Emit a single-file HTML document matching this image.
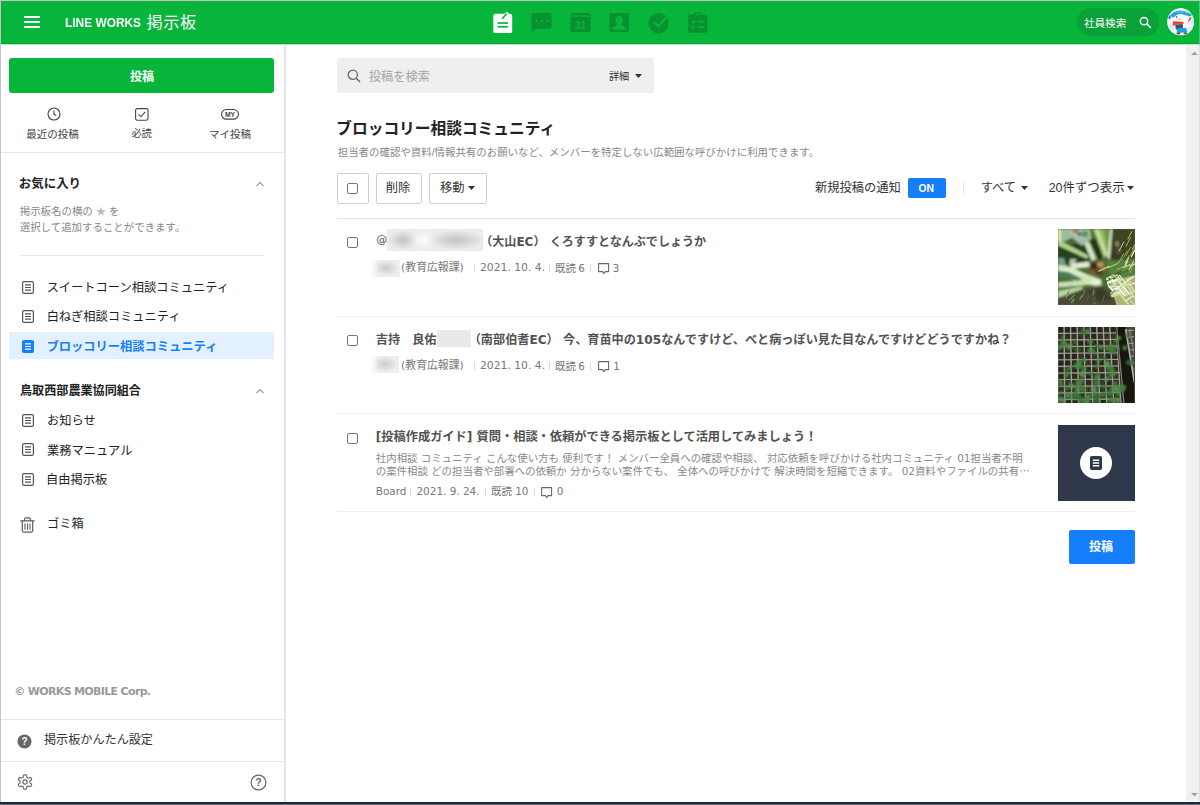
<!DOCTYPE html>
<html lang="ja">
<head>
<meta charset="utf-8">
<title>LINE WORKS 掲示板</title>
<style>
*{box-sizing:border-box;margin:0;padding:0}
html,body{width:1200px;height:805px;overflow:hidden;background:#fff}
body{font-family:"Liberation Sans","Noto Sans CJK JP",sans-serif;color:#222;position:relative;font-size:12px}
.abs{position:absolute}
.t{position:absolute;white-space:nowrap;line-height:1}
#frame-top{left:0;top:0;width:1200px;height:1px;background:#c4c4c4}
#frame-left{left:0;top:0;width:1px;height:805px;background:#c4c4c4}
#frame-bottom{left:0;top:802px;width:1200px;height:2px;background:#10284a}
#frame-bottom2{left:0;top:804px;width:1200px;height:1px;background:#6c6e78}
#frame-right{left:1199px;top:0;width:1px;height:802px;background:rgba(200,200,200,0.45)}
#header{left:1px;top:1px;width:1199px;height:43px;background:#07b53b}
.hb{position:absolute;left:24px;width:16px;height:2px;background:#fff}
#sidebar-border{left:284px;top:45px;width:2px;height:757px;background:#e3e3e3}
.hr{position:absolute;height:1px;background:#e6e6e6}
#scroll{left:1186px;top:45px;width:14px;height:756px;background:#f1f1f1}
.btn{position:absolute;border:1px solid #d0d0d0;border-radius:2px;background:#fff}
.cb{position:absolute;width:11px;height:11px;border:1px solid #767676;border-radius:2px;background:#fff}
.side-item{position:absolute;left:47px;font-size:12.5px;color:#222;white-space:nowrap;line-height:1}
.ptitle{font-size:12.5px;font-weight:bold;color:#525252;font-family:"DejaVu Sans","Noto Sans CJK JP",sans-serif}
.pbody{font-size:11px;color:#888;font-family:"DejaVu Sans","Noto Sans CJK JP",sans-serif}
.cjk{font-family:"Noto Sans CJK JP",sans-serif}
.meta{position:absolute;font-size:11px;color:#777;white-space:nowrap;line-height:1;font-family:"DejaVu Sans","Noto Sans CJK JP",sans-serif}
</style>
</head>
<body>
<!-- header -->
<div id="header" class="abs"></div>
<div class="abs" style="left:1px;top:43px;width:1199px;height:1px;background:#06a737"></div>
<div class="abs" style="left:1px;top:44px;width:1199px;height:1px;background:#b4e8c2"></div>
<div class="hb" style="top:16px"></div>
<div class="hb" style="top:21px"></div>
<div class="hb" style="top:26px"></div>
<div id="logo" class="t" style="left:65.2px;top:17px;font-size:12.6px;font-weight:bold;color:#fff;transform:scaleX(0.945);transform-origin:0 0">LINE WORKS</div>
<div id="logo2" class="t" style="left:146.4px;top:14.4px;font-size:16.2px;color:#fff;letter-spacing:0.6px">掲示板</div>


<!-- header app icons -->
<svg class="abs" style="left:493px;top:12px" width="20" height="21" viewBox="0 0 20 21">
  <path d="M2.5 1.8 H11.2 L13.2 0.2 Q14.2 -0.3 15 0.5 L15.6 1.8 H17 Q19.2 1.8 19.2 4 V19 Q19.2 21.2 17 21.2 H2.5 Q0.3 21.2 0.3 19 V4 Q0.3 1.8 2.5 1.8Z" fill="#fff"/>
  <path d="M9.6 6.2 L13.2 2.2" fill="none" stroke="#07b53b" stroke-width="1.7" stroke-linecap="round"/>
  <rect x="4.6" y="10.2" width="10.4" height="1.7" fill="#07b53b"/>
  <rect x="4.6" y="13.9" width="10.4" height="1.7" fill="#07b53b"/>
</svg>
<svg class="abs" style="left:531px;top:13px" width="21" height="20" viewBox="0 0 21 20">
  <path d="M2.3 0 H18.7 Q20.5 0 20.5 1.8 V14 Q20.5 15.8 18.7 15.8 H5.2 L0.5 19.6 V1.8 Q0.5 0 2.3 0Z" fill="#09902f"/>
  <circle cx="5.7" cy="8" r="1.2" fill="#07b53b"/><circle cx="10.9" cy="8" r="1.2" fill="#07b53b"/><circle cx="16.1" cy="8" r="1.2" fill="#07b53b"/>
</svg>
<svg class="abs" style="left:570px;top:13px" width="21" height="20" viewBox="0 0 21 20">
  <rect x="0.5" y="0" width="20" height="19" rx="1.8" fill="#09902f"/>
  <rect x="0.5" y="2.5" width="20" height="1.1" fill="#07b53b"/>
  <text x="10.5" y="15.6" font-family="Liberation Sans, sans-serif" font-weight="bold" font-size="10.5" text-anchor="middle" fill="#07b53b">31</text>
</svg>
<svg class="abs" style="left:609px;top:13px" width="21" height="20" viewBox="0 0 21 20">
  <rect x="0.5" y="0" width="19.5" height="19" rx="1.8" fill="#09902f"/>
  <path d="M10.2 3 C13.2 3 14 5.4 13.8 7.6 C13.6 9.6 12.8 10.6 12.4 11.2 C12.4 12.6 13.4 13 15.4 13.8 C16.8 14.4 17.4 15.2 17.4 16.8 H3 C3 15.2 3.6 14.4 5 13.8 C7 13 8 12.6 8 11.2 C7.6 10.6 6.8 9.6 6.6 7.6 C6.4 5.4 7.2 3 10.2 3Z" fill="#07b53b"/>
</svg>
<svg class="abs" style="left:648px;top:13px" width="21" height="21" viewBox="0 0 21 21">
  <circle cx="10.7" cy="10.2" r="10.2" fill="#09902f"/>
  <path d="M5.5 8.7 L10 13.3 L20.5 2.3" fill="none" stroke="#07b53b" stroke-width="2.3"/>
</svg>
<svg class="abs" style="left:688px;top:12px" width="20" height="21" viewBox="0 0 20 21">
  <path d="M2 2.6 H6 V1.4 Q6 0.2 7.2 0.2 H12.4 Q13.6 0.2 13.6 1.4 V2.6 H17.6 Q19.4 2.6 19.4 4.4 V19 Q19.4 20.8 17.6 20.8 H2 Q0.2 20.8 0.2 19 V4.4 Q0.2 2.6 2 2.6Z" fill="#09902f"/>
  <rect x="7.4" y="1.6" width="4.8" height="1.6" fill="#07b53b"/>
  <path d="M3.6 9.4 L5 10.8 L7.4 8.2" fill="none" stroke="#07b53b" stroke-width="1.3"/>
  <rect x="9.4" y="8.8" width="7" height="1.7" fill="#07b53b"/>
  <rect x="3.8" y="13.8" width="2.6" height="2.4" fill="#07b53b"/>
  <rect x="9.4" y="14.2" width="7" height="1.7" fill="#07b53b"/>
</svg>

<!-- header right -->
<div class="abs" style="left:1077px;top:8.3px;width:82px;height:27.4px;border-radius:14px;background:#0aa238"></div>
<div id="x1" class="t" style="left:1083.91px;top:17.7px;font-size:10.6px;color:#fff">社員検索</div>
<svg class="abs" style="left:1139px;top:16.2px" width="13" height="13" viewBox="0 0 13 13"><circle cx="5" cy="5.2" r="3.7" fill="none" stroke="#fff" stroke-width="1.4"/><path d="M7.8 8L11.4 11.4" stroke="#fff" stroke-width="1.5" stroke-linecap="round"/></svg>
<div class="abs" style="left:1166.6px;top:8.2px;width:27.6px;height:27.6px;border-radius:50%;overflow:hidden"><svg width="27.6" height="27.6" viewBox="0 0 27.6 27.6"><defs><filter id="ba" x="-10%" y="-10%" width="120%" height="120%"><feGaussianBlur stdDeviation="0.45"/></filter><clipPath id="ca"><circle cx="13.8" cy="13.8" r="13.8"/></clipPath></defs><g clip-path="url(#ca)"><rect width="27.6" height="27.6" fill="#f3f6fb"/><g filter="url(#ba)"><path d="M0 8 L4 5 L6 9 L2 13Z" fill="#cfe2f4"/><path d="M22 9 L27.6 8 L27.6 18 L23 16Z" fill="#dbe8f6"/><path d="M1 16 L6 15 L7 23 L3 22Z" fill="#dfeaf6"/><path d="M19 20 L25 18 L24 24 L20 25Z" fill="#e3ecf7"/><ellipse cx="2.6" cy="9.2" rx="1" ry="1.6" fill="#4c5c9c"/><path d="M3 7.4 Q7 2.6 13.5 3 Q20 2.8 25.4 7 L22.5 8.4 Q14 4.8 6 9.4Z" fill="#2aa0e4"/><path d="M9 3.6 Q13 1.6 18 3.2 L17 5 L10 5Z" fill="#43b0ea"/><circle cx="19.9" cy="4" r="1.2" fill="#e8c840"/><ellipse cx="13.4" cy="10" rx="5.6" ry="4" fill="#ffffff"/><ellipse cx="12.4" cy="11" rx="1.5" ry="0.9" fill="#e6d050"/><path d="M9 8 L10.2 8 L10.2 10 L9 10Z" fill="#3a78c8"/><path d="M6 13.2 L16.2 13.7 L16.9 15.7 L9.7 16.3 L5.7 17.9Z" fill="#e8442c"/><path d="M19.5 13.5 L23.5 9.2 L24.4 10 L21 14.4Z" fill="#b03a3a"/><path d="M17 11 L22 10 L21 14 L17 14Z" fill="#ffffff"/><path d="M8.2 16.4 L15.7 16 L16.2 21.6 L8.8 21.6Z" fill="#4a4e68"/><path d="M9.7 20.6 L19 19.6 L20.4 24.4 L10 24.8Z" fill="#2a9fe0"/><path d="M16 17 L19.5 17.5 L19 20 L16 20Z" fill="#ffffff"/><path d="M9.7 24.6 L13.2 24.6 L13.2 26.2 L9.7 26.2Z M16.7 24.6 L19.7 24.6 L19.7 26.2 L16.7 26.2Z" fill="#7a3a30"/></g></g></svg></div>

<!-- sidebar -->
<div id="sidebar-border" class="abs"></div>
<div class="abs" style="left:9px;top:58px;width:265px;height:35px;border-radius:3px;background:#07b53b"></div>
<div id="x2" class="t" style="left:130.08px;top:70.85px;font-size:12.05px;font-weight:bold;color:#fff">投稿</div>

<div id="x3" class="t" style="left:26.37px;top:128.5px;font-size:10.5px;color:#444">最近の投稿</div>
<div id="x4" class="t" style="left:131.45px;top:128.5px;font-size:10.2px;color:#444">必読</div>
<div id="x5" class="t" style="left:209px;top:128.5px;font-size:10.5px;color:#444">マイ投稿</div>

<div class="hr" style="left:1px;top:152px;width:284px"></div>
<div id="x6" class="t" style="left:18.83px;top:177.9px;font-size:12.45px;font-weight:bold;color:#222">お気に入り</div>
<div id="x7" class="t" style="left:19.73px;top:206.8px;font-size:10.45px;color:#888">掲示板名の横の <span style="color:#bbb">★</span> を</div>
<div id="x8" class="t" style="left:19.73px;top:222.7px;font-size:10.45px;color:#888">選択して追加することができます。</div>
<div class="hr" style="left:20px;top:255px;width:244px"></div>

<div id="x9" class="side-item" style="top:281.5px;font-size:12.25px;left:46.64px">スイートコーン相談コミュニティ</div>
<div id="x10" class="side-item" style="top:310.8px;font-size:12.25px;left:46.64px">白ねぎ相談コミュニティ</div>
<div class="abs" style="left:9px;top:332px;width:265px;height:27px;background:#e3f0ff"></div>
<div id="x11" class="side-item" style="top:340.5px;color:#157efb;font-weight:bold;font-size:12.25px;left:46.64px">ブロッコリー相談コミュニティ</div>

<div id="x12" class="t" style="left:20px;top:385.3px;font-size:12.1px;font-weight:bold;color:#222">鳥取西部農業協同組合</div>
<div id="x13" class="side-item" style="top:414.5px;font-size:12.25px;left:47px">お知らせ</div>
<div id="x14" class="side-item" style="top:444.5px;font-size:12.25px;left:47px">業務マニュアル</div>
<div id="x15" class="side-item" style="top:473.5px;font-size:12.25px;left:46.1px">自由掲示板</div>
<div id="x16" class="side-item" style="top:518.3px;font-size:12.25px;left:47px">ゴミ箱</div>

<div id="x17" class="t" style="left:14.3px;top:686px;font-size:11px;font-weight:bold;color:#999;font-family:'DejaVu Sans',sans-serif;letter-spacing:-0.66px">© WORKS MOBILE Corp.</div>
<div class="hr" style="left:1px;top:719px;width:284px"></div>
<div id="x18" class="t" style="left:44px;top:734.2px;font-size:12.12px;color:#333">掲示板かんたん設定</div>
<div class="hr" style="left:1px;top:761px;width:284px"></div>


<!-- sidebar icons -->
<svg class="abs" style="left:47px;top:107px" width="14" height="14" viewBox="0 0 14 14"><circle cx="7" cy="7" r="6" fill="none" stroke="#444" stroke-width="1.1"/><path d="M7 3.6V7.2L9.2 8.4" fill="none" stroke="#444" stroke-width="1.1"/></svg>
<svg class="abs" style="left:135px;top:108px" width="14" height="13" viewBox="0 0 14 13"><rect x="0.6" y="0.6" width="12.4" height="11.6" rx="1.6" fill="none" stroke="#444" stroke-width="1.1"/><path d="M3.6 6.4L6 8.8L10.2 3.8" fill="none" stroke="#444" stroke-width="1.1"/></svg>
<svg class="abs" style="left:221px;top:109px" width="18" height="11" viewBox="0 0 18 11"><rect x="0.55" y="0.55" width="16.9" height="9.6" rx="4.8" fill="none" stroke="#444" stroke-width="1.1"/><text x="9" y="7.8" font-family="Liberation Sans, sans-serif" font-weight="bold" font-size="6.8" text-anchor="middle" fill="#444">MY</text></svg>
<svg class="abs" style="left:255.2px;top:181px" width="10" height="6" viewBox="0 0 10 6"><path d="M1.5 5L5 1.5L8.5 5" fill="none" stroke="#999" stroke-width="1.1"/></svg>
<svg class="abs" style="left:255.2px;top:388px" width="10" height="6" viewBox="0 0 10 6"><path d="M1.5 5L5 1.5L8.5 5" fill="none" stroke="#999" stroke-width="1.1"/></svg>
<svg class="abs" style="left:22px;top:281px" width="12" height="13" viewBox="0 0 12 13"><rect x="0.6" y="0.6" width="10.8" height="11.8" rx="1.6" fill="#fff" stroke="#555" stroke-width="1.2"/><path d="M3 3.9H9M3 6.5H9M3 9.1H9" stroke="#555" stroke-width="1.1"/></svg><svg class="abs" style="left:22px;top:310px" width="12" height="13" viewBox="0 0 12 13"><rect x="0.6" y="0.6" width="10.8" height="11.8" rx="1.6" fill="#fff" stroke="#555" stroke-width="1.2"/><path d="M3 3.9H9M3 6.5H9M3 9.1H9" stroke="#555" stroke-width="1.1"/></svg><svg class="abs" style="left:22px;top:340px" width="12" height="13" viewBox="0 0 12 13"><rect x="0" y="0" width="12" height="13" rx="2" fill="#157efb"/><path d="M3 3.9H9M3 6.5H9M3 9.1H9" stroke="#fff" stroke-width="1.2"/></svg><svg class="abs" style="left:22px;top:414px" width="12" height="13" viewBox="0 0 12 13"><rect x="0.6" y="0.6" width="10.8" height="11.8" rx="1.6" fill="#fff" stroke="#555" stroke-width="1.2"/><path d="M3 3.9H9M3 6.5H9M3 9.1H9" stroke="#555" stroke-width="1.1"/></svg><svg class="abs" style="left:22px;top:443px" width="12" height="13" viewBox="0 0 12 13"><rect x="0.6" y="0.6" width="10.8" height="11.8" rx="1.6" fill="#fff" stroke="#555" stroke-width="1.2"/><path d="M3 3.9H9M3 6.5H9M3 9.1H9" stroke="#555" stroke-width="1.1"/></svg><svg class="abs" style="left:22px;top:473px" width="12" height="13" viewBox="0 0 12 13"><rect x="0.6" y="0.6" width="10.8" height="11.8" rx="1.6" fill="#fff" stroke="#555" stroke-width="1.2"/><path d="M3 3.9H9M3 6.5H9M3 9.1H9" stroke="#555" stroke-width="1.1"/></svg>
<svg class="abs" style="left:20.2px;top:516.6px" width="15" height="16" viewBox="0 0 15 16"><path d="M0.3 3.9H14.7M4.5 3.7V2.6Q4.5 0.9 6.2 0.9H8.8Q10.5 0.9 10.5 2.6V3.7M2.3 4.2V13.4Q2.3 15.2 4.1 15.2H10.9Q12.7 15.2 12.7 13.4V4.2" fill="none" stroke="#5a5a5a" stroke-width="1.2"/><path d="M5 6.6V12.8M7.5 6.6V12.8M10 6.6V12.8" stroke="#5a5a5a" stroke-width="1.1"/></svg>
<svg class="abs" style="left:17px;top:734px" width="15" height="15" viewBox="0 0 15 15"><circle cx="7.5" cy="7.5" r="7" fill="#666"/><text x="7.5" y="11.2" font-family="Liberation Sans, sans-serif" font-weight="bold" font-size="10" text-anchor="middle" fill="#fff">?</text></svg>
<svg class="abs" style="left:17px;top:774.1px" width="16" height="16" viewBox="0 0 16 16"><path d="M12.95 8.00 L12.95 7.78 L12.97 7.57 L13.02 7.34 L13.15 7.09 L13.44 6.79 L13.89 6.42 L14.32 6.01 L14.55 5.62 L14.59 5.27 L14.54 4.95 L14.42 4.66 L14.28 4.38 L14.11 4.11 L13.91 3.86 L13.66 3.65 L13.34 3.52 L12.89 3.52 L12.31 3.69 L11.76 3.89 L11.36 3.99 L11.08 3.98 L10.86 3.91 L10.66 3.82 L10.47 3.71 L10.29 3.60 L10.11 3.48 L9.94 3.32 L9.79 3.09 L9.68 2.69 L9.58 2.11 L9.43 1.53 L9.21 1.14 L8.93 0.92 L8.63 0.82 L8.32 0.77 L8.00 0.75 L7.68 0.77 L7.37 0.82 L7.07 0.92 L6.79 1.14 L6.57 1.53 L6.42 2.11 L6.32 2.69 L6.21 3.09 L6.06 3.32 L5.89 3.48 L5.71 3.60 L5.53 3.71 L5.34 3.82 L5.14 3.91 L4.92 3.98 L4.64 3.99 L4.24 3.89 L3.69 3.69 L3.11 3.52 L2.66 3.52 L2.34 3.65 L2.09 3.86 L1.89 4.11 L1.72 4.37 L1.58 4.66 L1.46 4.95 L1.41 5.27 L1.45 5.62 L1.68 6.01 L2.11 6.42 L2.56 6.79 L2.85 7.09 L2.98 7.34 L3.03 7.57 L3.05 7.78 L3.05 8.00 L3.05 8.22 L3.03 8.43 L2.98 8.66 L2.85 8.91 L2.56 9.21 L2.11 9.58 L1.68 9.99 L1.45 10.38 L1.41 10.73 L1.46 11.05 L1.58 11.34 L1.72 11.62 L1.89 11.89 L2.09 12.14 L2.34 12.35 L2.66 12.48 L3.11 12.48 L3.69 12.31 L4.24 12.11 L4.64 12.01 L4.92 12.02 L5.14 12.09 L5.34 12.18 L5.52 12.29 L5.71 12.40 L5.89 12.52 L6.06 12.68 L6.21 12.91 L6.32 13.31 L6.42 13.89 L6.57 14.47 L6.79 14.86 L7.07 15.08 L7.37 15.18 L7.68 15.23 L8.00 15.25 L8.32 15.23 L8.63 15.18 L8.93 15.08 L9.21 14.86 L9.43 14.47 L9.58 13.89 L9.68 13.31 L9.79 12.91 L9.94 12.68 L10.11 12.52 L10.29 12.40 L10.47 12.29 L10.66 12.18 L10.86 12.09 L11.08 12.02 L11.36 12.01 L11.76 12.11 L12.31 12.31 L12.89 12.48 L13.34 12.48 L13.66 12.35 L13.91 12.14 L14.11 11.89 L14.28 11.62 L14.42 11.34 L14.54 11.05 L14.59 10.73 L14.55 10.38 L14.32 9.99 L13.89 9.58 L13.44 9.21 L13.15 8.91 L13.02 8.66 L12.97 8.43 L12.95 8.22Z" fill="none" stroke="#666" stroke-width="1.2" stroke-linejoin="round"/><circle cx="8" cy="8" r="2.1" fill="none" stroke="#666" stroke-width="1.2"/></svg>
<svg class="abs" style="left:250px;top:774px" width="17" height="17" viewBox="0 0 17 17"><circle cx="8.5" cy="8.5" r="7.4" fill="none" stroke="#666" stroke-width="1.2"/><text x="8.5" y="12.3" font-family="Liberation Sans, sans-serif" font-weight="bold" font-size="10.5" text-anchor="middle" fill="#666">?</text></svg>

<!-- main -->
<div class="abs" style="left:337px;top:58px;width:317px;height:35px;border-radius:2px;background:#efefef"></div>
<div id="x19" class="t" style="left:368.82px;top:70.5px;font-size:12.25px;color:#a6a6a6">投稿を検索</div>
<div id="x20" class="t" style="left:608.9px;top:72px;font-size:10.2px;color:#333">詳細</div>

<div id="title" class="t" style="left:336.28px;top:120.5px;font-size:15.71px;font-weight:bold;color:#222">ブロッコリー相談コミュニティ</div>
<div id="desc" class="t" style="left:337.72px;top:147.5px;font-size:10.45px;color:#888">担当者の確認や資料/情報共有のお願いなど、メンバーを特定しない広範囲な呼びかけに利用できます。</div>

<div class="btn" style="left:337px;top:173px;width:32px;height:31px"></div>
<div class="cb" style="left:347px;top:183px"></div>
<div class="btn" style="left:376px;top:173px;width:46px;height:31px"></div>
<div id="x21" class="t" style="left:385.83px;top:182.4px;font-size:12.25px;color:#333">削除</div>
<div class="btn" style="left:429px;top:173px;width:58px;height:31px"></div>
<div id="x22" class="t" style="left:440.1px;top:182.4px;font-size:12.25px;color:#333">移動</div>

<div id="x23" class="t" style="left:815px;top:182.4px;font-size:12.25px;color:#333">新規投稿の通知</div>
<div class="abs" style="left:907.5px;top:178px;width:38px;height:20px;border-radius:2px;background:#157efb"></div>
<div id="x24" class="t" style="left:918.4px;top:183.7px;font-size:10.3px;font-weight:bold;color:#fff">ON</div>
<div class="abs" style="left:963px;top:181px;width:1px;height:14px;background:#e4e4e4"></div>
<div id="x25" class="t" style="left:980.64px;top:182.4px;font-size:12.25px;color:#333">すべて</div>
<div id="x26" class="t" style="left:1048.63px;top:181.9px;font-size:12.45px;color:#333">20件ずつ表示</div>


<!-- toolbar carets / search icon -->
<svg class="abs" style="left:347px;top:69px" width="14" height="14" viewBox="0 0 14 14"><circle cx="5.8" cy="5.8" r="4.6" fill="none" stroke="#666" stroke-width="1.3"/><path d="M9.2 9.2L13 13" stroke="#666" stroke-width="1.4"/></svg>
<svg class="abs caret" style="left:635px;top:74px" width="7" height="4" viewBox="0 0 7 4"><path d="M0 0H7L3.5 4Z" fill="#333"/></svg>
<svg class="abs caret" style="left:468px;top:186px" width="7" height="4" viewBox="0 0 7 4"><path d="M0 0H7L3.5 4Z" fill="#333"/></svg>
<svg class="abs caret" style="left:1021px;top:186px" width="7" height="4" viewBox="0 0 7 4"><path d="M0 0H7L3.5 4Z" fill="#333"/></svg>
<svg class="abs caret" style="left:1127px;top:186px" width="7" height="4" viewBox="0 0 7 4"><path d="M0 0H7L3.5 4Z" fill="#333"/></svg>

<!-- post 1 -->
<div class="cb" style="left:347px;top:237px"></div>
<div id="x27" class="t ptitle" style="left:376.2px;top:234.2px;font-size:11px;font-weight:normal;color:#555">@</div>
<div class="abs" style="left:387px;top:229px;width:96px;height:22px;background:radial-gradient(ellipse 13px 10px at 36px 11px, rgba(255,255,255,0.75) 0%, rgba(255,255,255,0) 100%),radial-gradient(ellipse 15px 10px at 16px 11px, rgba(110,110,110,0.33) 0%, rgba(110,110,110,0) 100%),radial-gradient(ellipse 30px 10px at 69px 11px, rgba(110,110,110,0.33) 0%, rgba(110,110,110,0) 100%),#ededed"></div>
<div id="p1t" class="t ptitle" style="left:480.19px;top:236.0px;font-size:12.07px">（大山EC） くろすすとなんぶでしょうか</div>
<div class="abs" style="left:370px;top:260px;width:30px;height:17px;background:linear-gradient(90deg,#fff 0%,rgba(255,255,255,0) 30%),radial-gradient(ellipse 13px 8px at 16px 8px, rgba(110,110,110,0.28) 0%, rgba(110,110,110,0) 100%),#eeeeee"></div>
<div id="x28" class="meta" style="left:401.1px;top:262.8px;font-size:10.85px">(教育広報課)</div>
<div class="abs" style="left:474px;top:264px;width:1px;height:8px;background:#dadada"></div>
<div id="x29" class="meta" style="left:480.01px;top:262.8px;font-size:10.78px">2021. 10. 4.</div>
<div class="abs" style="left:549px;top:264px;width:1px;height:8px;background:#dadada"></div>
<div id="x30" class="meta" style="left:555px;top:262.8px;font-size:10.45px;word-spacing:-0.9px">既読 6</div>
<div class="abs" style="left:590px;top:264px;width:1px;height:8px;background:#dadada"></div><svg class="abs" style="left:597.6px;top:263.4px" width="12" height="12" viewBox="0 0 12 12"><path d="M0.6 0.6H10.6V8.6H7.1L5.8 10.7L4.5 8.6H0.6Z" fill="none" stroke="#6a6a6a" stroke-width="1.1" stroke-linejoin="round"/></svg>
<div id="x31" class="meta" style="left:612.64px;top:262.8px;font-size:10.45px">3</div>

<!-- post 2 -->
<div class="cb" style="left:347px;top:335px"></div>
<div id="x32" class="t ptitle" style="left:375.8px;top:334.0px;font-size:12.15px">吉持　良佑</div>
<div class="abs" style="left:437px;top:330px;width:34px;height:17px;background:#e9e9e9"></div>
<div id="p2t" class="t ptitle" style="left:468.72px;top:334.0px;font-size:12.15px">（南部伯耆EC） 今、育苗中の105なんですけど、べと病っぽい見た目なんですけどどうですかね？</div>
<div class="abs" style="left:370px;top:356px;width:29px;height:17px;background:linear-gradient(90deg,#fff 0%,rgba(255,255,255,0) 30%),radial-gradient(ellipse 13px 8px at 15px 8px, rgba(110,110,110,0.26) 0%, rgba(110,110,110,0) 100%),#eeeeee"></div>
<div id="x33" class="meta" style="left:401.1px;top:360.8px;font-size:10.85px">(教育広報課)</div>
<div class="abs" style="left:474px;top:362px;width:1px;height:8px;background:#dadada"></div>
<div id="x34" class="meta" style="left:480.01px;top:360.8px;font-size:10.78px">2021. 10. 4.</div>
<div class="abs" style="left:549px;top:362px;width:1px;height:8px;background:#dadada"></div>
<div id="x35" class="meta" style="left:555px;top:360.8px;font-size:10.45px;word-spacing:-0.9px">既読 6</div>
<div class="abs" style="left:590px;top:362px;width:1px;height:8px;background:#dadada"></div><svg class="abs" style="left:597.6px;top:361.4px" width="12" height="12" viewBox="0 0 12 12"><path d="M0.6 0.6H10.6V8.6H7.1L5.8 10.7L4.5 8.6H0.6Z" fill="none" stroke="#6a6a6a" stroke-width="1.1" stroke-linejoin="round"/></svg>
<div id="x36" class="meta" style="left:613.18px;top:360.8px;font-size:10.45px">1</div>

<!-- post 3 -->
<div class="cb" style="left:347px;top:433px"></div>
<div id="p3t" class="t ptitle" style="left:375.79px;top:430.6px;font-size:12.21px">[投稿作成ガイド] 質問・相談・依頼ができる掲示板として活用してみましょう！</div>
<div id="p3b1" class="t pbody" style="left:375.81px;top:452.9px;font-size:10.43px">社内相談 コミュニティ こんな使い方も 便利です！ メンバー全員への確認や相談、 対応依頼を呼びかける社内コミュニティ 01担当者不明</div>
<div id="p3b2" class="t pbody" style="left:375.78px;top:465.9px;font-size:10.43px">の案件相談 どの担当者や部署への依頼か 分からない案件でも、 全体への呼びかけで 解決時間を短縮できます。 02資料やファイルの共有<span class="cjk">…</span></div>
<div id="x37" class="meta" style="left:375.78px;top:486.1px;font-size:10.45px">Board</div>
<div class="abs" style="left:410px;top:488px;width:1px;height:8px;background:#dadada"></div>
<div id="x38" class="meta" style="left:416.46px;top:486.1px;font-size:10.45px">2021. 9. 24.</div>
<div class="abs" style="left:485px;top:488px;width:1px;height:8px;background:#dadada"></div>
<div id="x39" class="meta" style="left:491px;top:486.1px;font-size:10.45px">既読 10</div>
<div class="abs" style="left:534px;top:488px;width:1px;height:8px;background:#dadada"></div><svg class="abs" style="left:540.6px;top:487.4px" width="12" height="12" viewBox="0 0 12 12"><path d="M0.6 0.6H10.6V8.6H7.1L5.8 10.7L4.5 8.6H0.6Z" fill="none" stroke="#6a6a6a" stroke-width="1.1" stroke-linejoin="round"/></svg>
<div id="x40" class="meta" style="left:556.63px;top:486.1px;font-size:10.45px">0</div>

<!-- thumbnails -->
<div id="th1" class="abs" style="left:1058px;top:229px;width:76.6px;height:76px;background:#6b8a4a;overflow:hidden"><svg class="abs" style="left:0;top:0" width="77" height="76" viewBox="0 0 76 76" preserveAspectRatio="none"><defs><filter id="b1" x="-10%" y="-10%" width="120%" height="120%"><feGaussianBlur stdDeviation="0.8"/></filter><filter id="b1s" x="-10%" y="-10%" width="120%" height="120%"><feGaussianBlur stdDeviation="0.6"/></filter></defs><rect width="76" height="76" fill="#4a6a32"/><g filter="url(#b1)"><path d="M0 17 L26 14 L34 32 L12 36 L0 32Z" fill="#25401f"/><path d="M3 0 L32 0 L33 9.5 L28.5 15 L23 16.5 L14 9 L3 14Z" fill="#9dbba2"/><path d="M10 2 L30 1 L30 8 L20 12Z" fill="#a9c6ad"/><ellipse cx="17.3" cy="2.2" rx="2.8" ry="2" fill="#bf6b5c"/><ellipse cx="21" cy="5" rx="2" ry="2.2" fill="#4c6c7c"/><ellipse cx="26.5" cy="5" rx="3.4" ry="3.2" fill="#5c9658"/><path d="M0 0 L3 0 L3 15 L0 16Z" fill="#e6efb2"/><path d="M0 12.5 L3 12 L30 26.5 L29 30 L0 16.5Z" fill="#b2d38c"/><path d="M26 14 L31 13.5 L38 30 L33 32Z" fill="#d3e4c4"/><path d="M31 11 L38 9 L45 28 L40 31Z" fill="#283018"/><path d="M34 0 L47 0 L51 27 L45 29Z" fill="#8fb862"/><path d="M36 0 L40 0 L49 25 L46 27Z" fill="#c4dd9c"/><path d="M45 0 L50 0 L53 20 L50 28Z" fill="#6f9a45"/><path d="M51.5 0 L53.5 0 L51 30 L49 30Z" fill="#e6efdc"/><path d="M54 0 L76 0 L76 34 L58 36 L52 30Z" fill="#3d4522"/><ellipse cx="59.5" cy="24" rx="5.5" ry="10" fill="#3a3a28"/><ellipse cx="58.5" cy="15" rx="2" ry="3" fill="#8a8262"/><ellipse cx="60" cy="22" rx="2.5" ry="3" fill="#5c5640"/><path d="M48 32 L76 30 L76 50 L52 50Z" fill="#56823a"/><path d="M0 29 L6 29 L8 37 L0 38Z" fill="#7a9c8c"/><path d="M12 30 L18 30 L17 35 L11 35Z" fill="#a8c4a4"/><path d="M11.7 35 L30.7 32.5 L31.5 38 L14 40Z" fill="#e1ecd2"/><path d="M0 36 L12 37.5 L28.5 45 L43 50.5 L43 56.5 L25 56 L14 51 L0 45Z" fill="#cfe4b8"/><path d="M0 42 L10 43 L24 50 L20 52 L0 48Z" fill="#4a7c5c"/><ellipse cx="37" cy="53.5" rx="5.5" ry="3.2" fill="#e9f1de"/><path d="M0 37 L12 38.5 L26 45 L24 47 L0 40Z" fill="#dcecc8"/><path d="M0 53 L25 51.5 L27 56.5 L0 58.7Z" fill="#c6dfae"/><path d="M0 59 L18 57 L18 59 L0 62Z" fill="#3f6a48"/><path d="M0 62 L23 57.6 L25 60 L0 69Z" fill="#b7d89e"/><path d="M0 69 L25 60 L45 57.6 L58.7 70 L58.7 76 L0 76Z" fill="#4a4638"/><path d="M30 62 L44 60 L52 70 L40 72Z" fill="#3a382c"/><ellipse cx="39" cy="39" rx="8.5" ry="7.5" fill="#76592f"/><ellipse cx="35.5" cy="37" rx="3.5" ry="3.5" fill="#3d2c18"/><ellipse cx="42" cy="35.5" rx="3.5" ry="2.5" fill="#b09362"/><ellipse cx="41" cy="43" rx="4" ry="2.5" fill="#4a3820"/><ellipse cx="44.5" cy="40" rx="2.5" ry="2.5" fill="#8d7040"/></g><g filter="url(#b1s)" stroke-linecap="round"><clipPath id="c1"><path d="M47 50 L60 44 L77 44 L77 77 L56 77Z"/></clipPath><g clip-path="url(#c1)"><path d="M50 52 L77 46 L77 77 L58 77Z" fill="#a9b87a"/><path d="M62.7 64.8 L49.9 68.8" stroke="#d3df9f" stroke-width="1.5"/><path d="M66.4 53.5 L60.2 45.7" stroke="#fafaf2" stroke-width="1.1"/><path d="M58.5 50.7 L46.6 54.5" stroke="#f2f5e2" stroke-width="2.0"/><path d="M68.3 66.5 L63.8 60.8" stroke="#f2f5e2" stroke-width="1.1"/><path d="M55.3 55.3 L60.3 51.5" stroke="#d3df9f" stroke-width="1.4"/><path d="M73.6 63.6 L66.7 54.9" stroke="#d3df9f" stroke-width="1.7"/><path d="M62.8 56.3 L74.0 48.0" stroke="#f2f5e2" stroke-width="1.3"/><path d="M56.4 56.7 L50.2 58.6" stroke="#f2f5e2" stroke-width="1.1"/><path d="M58.1 50.0 L54.3 45.2" stroke="#f2f5e2" stroke-width="1.2"/><path d="M75.5 62.1 L62.3 66.3" stroke="#d3df9f" stroke-width="1.1"/><path d="M67.6 71.4 L74.2 66.5" stroke="#f2f5e2" stroke-width="1.3"/><path d="M77.0 70.7 L72.7 65.3" stroke="#f7f8ec" stroke-width="1.0"/><path d="M63.0 62.6 L52.1 66.0" stroke="#f7f8ec" stroke-width="1.5"/><path d="M77.6 71.1 L71.8 63.8" stroke="#d3df9f" stroke-width="1.4"/><path d="M77.7 48.0 L88.1 40.3" stroke="#fafaf2" stroke-width="2.0"/><path d="M50.5 53.6 L41.9 42.7" stroke="#fafaf2" stroke-width="1.0"/><path d="M54.1 61.2 L59.0 57.6" stroke="#fafaf2" stroke-width="1.8"/><path d="M60.8 50.2 L56.1 44.2" stroke="#f7f8ec" stroke-width="1.6"/><path d="M60.4 61.6 L51.9 50.9" stroke="#d3df9f" stroke-width="1.9"/><path d="M55.1 52.6 L46.9 42.3" stroke="#fafaf2" stroke-width="1.7"/><path d="M54.4 66.9 L44.5 70.0" stroke="#d3df9f" stroke-width="1.6"/><path d="M61.8 51.1 L57.9 46.2" stroke="#e4ecc4" stroke-width="1.7"/><path d="M61.0 60.6 L71.6 52.7" stroke="#d3df9f" stroke-width="1.5"/><path d="M76.0 77.3 L71.7 71.8" stroke="#d3df9f" stroke-width="1.3"/><path d="M75.7 54.1 L69.9 56.0" stroke="#e4ecc4" stroke-width="1.4"/><path d="M51.7 53.3 L46.1 46.3" stroke="#fafaf2" stroke-width="1.1"/><path d="M53.9 61.5 L48.5 54.8" stroke="#fafaf2" stroke-width="1.6"/><path d="M75.9 62.2 L70.4 55.3" stroke="#e4ecc4" stroke-width="1.0"/><path d="M67.8 62.5 L60.5 53.2" stroke="#e4ecc4" stroke-width="2.0"/><path d="M52.1 64.4 L61.6 57.2" stroke="#f7f8ec" stroke-width="1.4"/><path d="M69.2 75.0 L61.1 64.9" stroke="#d3df9f" stroke-width="1.9"/><path d="M66.0 66.7 L60.4 59.7" stroke="#fafaf2" stroke-width="1.6"/><path d="M52.2 67.2 L63.4 58.8" stroke="#d3df9f" stroke-width="1.4"/><path d="M70.6 65.4 L64.7 58.0" stroke="#fafaf2" stroke-width="1.5"/></g><path d="M64.4 37.6 L58.4 40.4" stroke="#a6c672" stroke-width="1.0"/><path d="M69.6 41.0 L59.7 45.5" stroke="#3d6428" stroke-width="1.0"/><path d="M50.3 37.4 L40.0 42.2" stroke="#c4d89a" stroke-width="1.2"/><path d="M71.1 38.2 L59.0 43.8" stroke="#3d6428" stroke-width="1.4"/><path d="M59.2 44.0 L52.3 47.2" stroke="#3d6428" stroke-width="1.4"/><path d="M71.1 35.6 L64.2 38.8" stroke="#c4d89a" stroke-width="1.2"/><path d="M58.9 34.5 L49.9 38.6" stroke="#a6c672" stroke-width="1.3"/><path d="M76.6 37.0 L70.0 40.1" stroke="#3d6428" stroke-width="1.1"/><path d="M75.9 47.0 L67.8 50.8" stroke="#dfe8c0" stroke-width="1.1"/><path d="M58.8 47.1 L46.4 52.9" stroke="#3d6428" stroke-width="1.0"/><path d="M73.2 37.0 L63.4 41.6" stroke="#7aa24c" stroke-width="1.2"/><path d="M58.7 46.2 L53.1 48.8" stroke="#c4d89a" stroke-width="1.1"/><path d="M55.3 45.8 L48.0 49.3" stroke="#c4d89a" stroke-width="1.4"/><path d="M77.6 34.1 L71.4 37.0" stroke="#dfe8c0" stroke-width="1.3"/><path d="M74.5 32.7 L70.1 41.0" stroke="#dbe3ac" stroke-width="1.1"/><path d="M64.6 24.9 L60.0 33.6" stroke="#c2cf86" stroke-width="0.8"/><path d="M64.9 13.1 L60.5 21.5" stroke="#dbe3ac" stroke-width="0.9"/><path d="M74.3 31.0 L71.7 35.8" stroke="#7f9450" stroke-width="0.8"/><path d="M68.2 22.0 L63.0 31.7" stroke="#7f9450" stroke-width="1.0"/><path d="M71.7 18.1 L66.9 27.2" stroke="#9eae66" stroke-width="0.9"/><path d="M71.7 8.6 L67.2 17.1" stroke="#c2cf86" stroke-width="0.8"/><path d="M76.2 33.4 L70.9 43.4" stroke="#9eae66" stroke-width="0.8"/><path d="M72.9 2.5 L69.1 9.8" stroke="#c2cf86" stroke-width="0.9"/><path d="M69.9 26.6 L66.1 33.7" stroke="#c2cf86" stroke-width="0.8"/><path d="M75.6 15.7 L73.3 20.2" stroke="#9eae66" stroke-width="1.0"/><path d="M76.5 17.1 L71.1 27.3" stroke="#7f9450" stroke-width="1.2"/><path d="M68.9 32.4 L66.3 37.1" stroke="#dbe3ac" stroke-width="0.9"/><path d="M70.1 28.6 L66.0 36.2" stroke="#dbe3ac" stroke-width="1.0"/><path d="M75.2 19.9 L72.0 26.0" stroke="#7f9450" stroke-width="1.2"/><path d="M75.7 21.5 L72.5 27.6" stroke="#dbe3ac" stroke-width="1.2"/><path d="M34.2 71.4 L36.8 67.4" stroke="#4a7430" stroke-width="1"/><path d="M8.2 68.9 L9.8 63.5" stroke="#78a24e" stroke-width="1"/><path d="M35.2 76.9 L36.4 73.2" stroke="#5f8c3c" stroke-width="1"/><path d="M11.3 71.0 L16.0 66.1" stroke="#78a24e" stroke-width="1"/><path d="M21.5 70.2 L23.6 66.4" stroke="#78a24e" stroke-width="1"/><path d="M34.2 65.4 L35.6 60.5" stroke="#78a24e" stroke-width="1"/><path d="M14.5 74.1 L15.8 70.8" stroke="#5f8c3c" stroke-width="1"/><path d="M8.6 67.7 L11.2 61.6" stroke="#78a24e" stroke-width="1"/><path d="M13.2 73.5 L15.6 69.8" stroke="#78a24e" stroke-width="1"/><path d="M43.9 73.1 L45.7 66.4" stroke="#4a7430" stroke-width="1"/><path d="M28.7 70.9 L30.2 67.0" stroke="#4a7430" stroke-width="1"/><path d="M34.7 66.8 L37.4 62.8" stroke="#4a7430" stroke-width="1"/><path d="M50.8 67.0 L56.1 60.9" stroke="#5f8c3c" stroke-width="1"/><path d="M23.8 68.1 L26.6 61.2" stroke="#5f8c3c" stroke-width="1"/></g></svg></div>
<div id="th2" class="abs" style="left:1058px;top:327px;width:76.6px;height:76px;background:#3a4030;overflow:hidden"><svg class="abs" style="left:0;top:0" width="76" height="76" viewBox="0 0 76 76"><defs><filter id="b2" x="-5%" y="-5%" width="110%" height="110%"><feGaussianBlur stdDeviation="0.7"/></filter><filter id="b2b" x="-20%" y="-20%" width="140%" height="140%"><feGaussianBlur stdDeviation="0.9"/></filter></defs><rect width="76" height="76" fill="#2b2a1d"/><g filter="url(#b2)"><path d="M-0.4 -1 L-0.3 77" stroke="#80807a" stroke-width="1.4"/><path d="M6.1 -1 L6.7 77" stroke="#a2a29e" stroke-width="1.4"/><path d="M12.6 -1 L13.7 77" stroke="#a2a29e" stroke-width="1.4"/><path d="M19.1 -1 L20.7 77" stroke="#a2a29e" stroke-width="1.4"/><path d="M25.7 -1 L27.8 77" stroke="#a2a29e" stroke-width="1.4"/><path d="M32.2 -1 L34.8 77" stroke="#a2a29e" stroke-width="1.4"/><path d="M38.7 -1 L41.8 77" stroke="#a2a29e" stroke-width="1.4"/><path d="M45.2 -1 L48.8 77" stroke="#a2a29e" stroke-width="1.4"/><path d="M51.7 -1 L55.8 77" stroke="#a2a29e" stroke-width="1.4"/><path d="M58.3 -1 L62.8 77" stroke="#a2a29e" stroke-width="1.4"/><path d="M64.8 -1 L69.9 77" stroke="#a2a29e" stroke-width="1.4"/><path d="M-1 6.4 L62 5.8" stroke="#9e9e9a" stroke-width="1.3"/><path d="M-1 13.0 L62 12.4" stroke="#9e9e9a" stroke-width="1.3"/><path d="M-1 19.6 L62 19.0" stroke="#9e9e9a" stroke-width="1.3"/><path d="M-1 26.3 L62 25.7" stroke="#9e9e9a" stroke-width="1.3"/><path d="M-1 32.9 L62 32.3" stroke="#9e9e9a" stroke-width="1.3"/><path d="M-1 39.5 L62 38.9" stroke="#9e9e9a" stroke-width="1.3"/><path d="M-1 46.1 L62 45.5" stroke="#9e9e9a" stroke-width="1.3"/><path d="M-1 52.7 L62 52.1" stroke="#9e9e9a" stroke-width="1.3"/><path d="M-1 59.4 L62 58.8" stroke="#9e9e9a" stroke-width="1.3"/><path d="M-1 66.0 L62 65.4" stroke="#9e9e9a" stroke-width="1.3"/><path d="M-1 72.6 L62 72.0" stroke="#9e9e9a" stroke-width="1.3"/><path d="M-1 79.2 L62 78.6" stroke="#9e9e9a" stroke-width="1.3"/><rect x="0.8" y="0.7" width="4.2" height="4.2" fill="#26241a"/><rect x="0.8" y="7.3" width="4.2" height="4.2" fill="#332b1a"/><rect x="0.8" y="13.9" width="4.2" height="4.2" fill="#3a3220"/><rect x="0.8" y="20.5" width="4.2" height="4.2" fill="#2a2618"/><rect x="0.9" y="27.2" width="4.2" height="4.2" fill="#2a2618"/><rect x="0.9" y="33.8" width="4.2" height="4.2" fill="#2a2618"/><rect x="0.9" y="40.4" width="4.2" height="4.2" fill="#26241a"/><rect x="1.0" y="47.0" width="4.2" height="4.2" fill="#2a2618"/><rect x="1.0" y="53.6" width="4.2" height="4.2" fill="#332b1a"/><rect x="1.0" y="60.3" width="4.2" height="4.2" fill="#2a2618"/><rect x="1.1" y="66.9" width="4.2" height="4.2" fill="#2a2618"/><rect x="1.1" y="73.5" width="4.2" height="4.2" fill="#3a3220"/><rect x="1.1" y="80.1" width="4.2" height="4.2" fill="#3a3220"/><rect x="7.3" y="0.7" width="4.2" height="4.2" fill="#2a2618"/><rect x="7.4" y="7.3" width="4.2" height="4.2" fill="#332b1a"/><rect x="7.4" y="13.9" width="4.2" height="4.2" fill="#2a2618"/><rect x="7.5" y="20.5" width="4.2" height="4.2" fill="#3a3220"/><rect x="7.6" y="27.2" width="4.2" height="4.2" fill="#2a2618"/><rect x="7.7" y="33.8" width="4.2" height="4.2" fill="#2a2618"/><rect x="7.7" y="40.4" width="4.2" height="4.2" fill="#332b1a"/><rect x="7.8" y="47.0" width="4.2" height="4.2" fill="#2a2618"/><rect x="7.9" y="53.6" width="4.2" height="4.2" fill="#3a3220"/><rect x="8.0" y="60.3" width="4.2" height="4.2" fill="#2a2618"/><rect x="8.0" y="66.9" width="4.2" height="4.2" fill="#332b1a"/><rect x="8.1" y="73.5" width="4.2" height="4.2" fill="#2a2618"/><rect x="8.2" y="80.1" width="4.2" height="4.2" fill="#332b1a"/><rect x="13.8" y="0.7" width="4.2" height="4.2" fill="#26241a"/><rect x="13.9" y="7.3" width="4.2" height="4.2" fill="#3a3220"/><rect x="14.1" y="13.9" width="4.2" height="4.2" fill="#332b1a"/><rect x="14.2" y="20.5" width="4.2" height="4.2" fill="#2a2618"/><rect x="14.3" y="27.2" width="4.2" height="4.2" fill="#26241a"/><rect x="14.4" y="33.8" width="4.2" height="4.2" fill="#332b1a"/><rect x="14.5" y="40.4" width="4.2" height="4.2" fill="#2a2618"/><rect x="14.7" y="47.0" width="4.2" height="4.2" fill="#332b1a"/><rect x="14.8" y="53.6" width="4.2" height="4.2" fill="#26241a"/><rect x="14.9" y="60.3" width="4.2" height="4.2" fill="#2a2618"/><rect x="15.0" y="66.9" width="4.2" height="4.2" fill="#2a2618"/><rect x="15.1" y="73.5" width="4.2" height="4.2" fill="#2a2618"/><rect x="15.2" y="80.1" width="4.2" height="4.2" fill="#332b1a"/><rect x="20.4" y="0.7" width="4.2" height="4.2" fill="#3a3220"/><rect x="20.5" y="7.3" width="4.2" height="4.2" fill="#3a3220"/><rect x="20.7" y="13.9" width="4.2" height="4.2" fill="#26241a"/><rect x="20.9" y="20.5" width="4.2" height="4.2" fill="#3a3220"/><rect x="21.0" y="27.2" width="4.2" height="4.2" fill="#3a3220"/><rect x="21.2" y="33.8" width="4.2" height="4.2" fill="#26241a"/><rect x="21.3" y="40.4" width="4.2" height="4.2" fill="#26241a"/><rect x="21.5" y="47.0" width="4.2" height="4.2" fill="#332b1a"/><rect x="21.7" y="53.6" width="4.2" height="4.2" fill="#332b1a"/><rect x="21.8" y="60.3" width="4.2" height="4.2" fill="#332b1a"/><rect x="22.0" y="66.9" width="4.2" height="4.2" fill="#2a2618"/><rect x="22.1" y="73.5" width="4.2" height="4.2" fill="#26241a"/><rect x="22.3" y="80.1" width="4.2" height="4.2" fill="#3a3220"/><rect x="26.9" y="0.7" width="4.2" height="4.2" fill="#26241a"/><rect x="27.1" y="7.3" width="4.2" height="4.2" fill="#3a3220"/><rect x="27.3" y="13.9" width="4.2" height="4.2" fill="#26241a"/><rect x="27.5" y="20.5" width="4.2" height="4.2" fill="#2a2618"/><rect x="27.7" y="27.2" width="4.2" height="4.2" fill="#2a2618"/><rect x="27.9" y="33.8" width="4.2" height="4.2" fill="#3a3220"/><rect x="28.1" y="40.4" width="4.2" height="4.2" fill="#332b1a"/><rect x="28.3" y="47.0" width="4.2" height="4.2" fill="#26241a"/><rect x="28.5" y="53.6" width="4.2" height="4.2" fill="#332b1a"/><rect x="28.7" y="60.3" width="4.2" height="4.2" fill="#3a3220"/><rect x="28.9" y="66.9" width="4.2" height="4.2" fill="#3a3220"/><rect x="29.1" y="73.5" width="4.2" height="4.2" fill="#2a2618"/><rect x="29.4" y="80.1" width="4.2" height="4.2" fill="#2a2618"/><rect x="33.4" y="0.7" width="4.2" height="4.2" fill="#26241a"/><rect x="33.7" y="7.3" width="4.2" height="4.2" fill="#26241a"/><rect x="33.9" y="13.9" width="4.2" height="4.2" fill="#26241a"/><rect x="34.2" y="20.5" width="4.2" height="4.2" fill="#3a3220"/><rect x="34.4" y="27.2" width="4.2" height="4.2" fill="#3a3220"/><rect x="34.7" y="33.8" width="4.2" height="4.2" fill="#2a2618"/><rect x="34.9" y="40.4" width="4.2" height="4.2" fill="#2a2618"/><rect x="35.2" y="47.0" width="4.2" height="4.2" fill="#26241a"/><rect x="35.4" y="53.6" width="4.2" height="4.2" fill="#3a3220"/><rect x="35.7" y="60.3" width="4.2" height="4.2" fill="#2a2618"/><rect x="35.9" y="66.9" width="4.2" height="4.2" fill="#2a2618"/><rect x="36.2" y="73.5" width="4.2" height="4.2" fill="#26241a"/><rect x="36.4" y="80.1" width="4.2" height="4.2" fill="#3a3220"/><rect x="40.0" y="0.7" width="4.2" height="4.2" fill="#26241a"/><rect x="40.3" y="7.3" width="4.2" height="4.2" fill="#3a3220"/><rect x="40.6" y="13.9" width="4.2" height="4.2" fill="#26241a"/><rect x="40.9" y="20.5" width="4.2" height="4.2" fill="#2a2618"/><rect x="41.1" y="27.2" width="4.2" height="4.2" fill="#3a3220"/><rect x="41.4" y="33.8" width="4.2" height="4.2" fill="#26241a"/><rect x="41.7" y="40.4" width="4.2" height="4.2" fill="#332b1a"/><rect x="42.0" y="47.0" width="4.2" height="4.2" fill="#2a2618"/><rect x="42.3" y="53.6" width="4.2" height="4.2" fill="#3a3220"/><rect x="42.6" y="60.3" width="4.2" height="4.2" fill="#2a2618"/><rect x="42.9" y="66.9" width="4.2" height="4.2" fill="#332b1a"/><rect x="43.2" y="73.5" width="4.2" height="4.2" fill="#26241a"/><rect x="43.5" y="80.1" width="4.2" height="4.2" fill="#332b1a"/><rect x="46.5" y="0.7" width="4.2" height="4.2" fill="#332b1a"/><rect x="46.9" y="7.3" width="4.2" height="4.2" fill="#3a3220"/><rect x="47.2" y="13.9" width="4.2" height="4.2" fill="#3a3220"/><rect x="47.5" y="20.5" width="4.2" height="4.2" fill="#3a3220"/><rect x="47.9" y="27.2" width="4.2" height="4.2" fill="#2a2618"/><rect x="48.2" y="33.8" width="4.2" height="4.2" fill="#332b1a"/><rect x="48.5" y="40.4" width="4.2" height="4.2" fill="#3a3220"/><rect x="48.9" y="47.0" width="4.2" height="4.2" fill="#3a3220"/><rect x="49.2" y="53.6" width="4.2" height="4.2" fill="#26241a"/><rect x="49.5" y="60.3" width="4.2" height="4.2" fill="#332b1a"/><rect x="49.9" y="66.9" width="4.2" height="4.2" fill="#3a3220"/><rect x="50.2" y="73.5" width="4.2" height="4.2" fill="#26241a"/><rect x="50.5" y="80.1" width="4.2" height="4.2" fill="#3a3220"/><rect x="53.1" y="0.7" width="4.2" height="4.2" fill="#26241a"/><rect x="53.4" y="7.3" width="4.2" height="4.2" fill="#3a3220"/><rect x="53.8" y="13.9" width="4.2" height="4.2" fill="#332b1a"/><rect x="54.2" y="20.5" width="4.2" height="4.2" fill="#332b1a"/><rect x="54.6" y="27.2" width="4.2" height="4.2" fill="#2a2618"/><rect x="54.9" y="33.8" width="4.2" height="4.2" fill="#332b1a"/><rect x="55.3" y="40.4" width="4.2" height="4.2" fill="#332b1a"/><rect x="55.7" y="47.0" width="4.2" height="4.2" fill="#332b1a"/><rect x="56.1" y="53.6" width="4.2" height="4.2" fill="#332b1a"/><rect x="56.5" y="60.3" width="4.2" height="4.2" fill="#2a2618"/><rect x="56.8" y="66.9" width="4.2" height="4.2" fill="#3a3220"/><rect x="57.2" y="73.5" width="4.2" height="4.2" fill="#332b1a"/><rect x="57.6" y="80.1" width="4.2" height="4.2" fill="#26241a"/><rect x="59.6" y="0.7" width="4.2" height="4.2" fill="#26241a"/><rect x="60.0" y="7.3" width="4.2" height="4.2" fill="#2a2618"/><rect x="60.4" y="13.9" width="4.2" height="4.2" fill="#332b1a"/><rect x="60.9" y="20.5" width="4.2" height="4.2" fill="#3a3220"/><rect x="61.3" y="27.2" width="4.2" height="4.2" fill="#26241a"/><rect x="61.7" y="33.8" width="4.2" height="4.2" fill="#26241a"/><rect x="62.1" y="40.4" width="4.2" height="4.2" fill="#332b1a"/><rect x="62.5" y="47.0" width="4.2" height="4.2" fill="#2a2618"/><rect x="63.0" y="53.6" width="4.2" height="4.2" fill="#3a3220"/><rect x="63.4" y="60.3" width="4.2" height="4.2" fill="#3a3220"/><rect x="63.8" y="66.9" width="4.2" height="4.2" fill="#3a3220"/><rect x="64.2" y="73.5" width="4.2" height="4.2" fill="#3a3220"/><rect x="64.6" y="80.1" width="4.2" height="4.2" fill="#3a3220"/></g><g filter="url(#b2)"><path d="M57.5 -1 L68 -1 L77 62 L77 77 L64.8 77Z" fill="#15150f"/><path d="M58.6 -1 L66 77" stroke="#9a9a94" stroke-width="1.3" opacity="0.8"/><path d="M67.5 -1 L77 -1 L77 60Z" fill="#4a4a40"/><path d="M67.6 2 L76.5 56" stroke="#b5b5ae" stroke-width="1.6"/><path d="M71.5 2 L77 30" stroke="#8a8a80" stroke-width="1.2"/><path d="M68.0 4.0 L77 3.2" stroke="#9c9c94" stroke-width="1.1"/><path d="M69.0 10.4 L77 9.6" stroke="#9c9c94" stroke-width="1.1"/><path d="M70.1 16.8 L77 16.0" stroke="#9c9c94" stroke-width="1.1"/><path d="M71.2 23.2 L77 22.4" stroke="#9c9c94" stroke-width="1.1"/><path d="M72.2 29.6 L77 28.8" stroke="#9c9c94" stroke-width="1.1"/><path d="M73.2 36.0 L77 35.2" stroke="#9c9c94" stroke-width="1.1"/><path d="M74.3 42.4 L77 41.6" stroke="#9c9c94" stroke-width="1.1"/><path d="M75.3 48.8 L77 48.0" stroke="#9c9c94" stroke-width="1.1"/></g><g filter="url(#b2b)"><ellipse cx="8.4" cy="47.9" rx="2.7" ry="2.8" fill="#47823f" opacity="0.92"/><ellipse cx="5.8" cy="16.4" rx="3.5" ry="3.7" fill="#47823f" opacity="0.92"/><ellipse cx="25.1" cy="4.9" rx="3.7" ry="2.9" fill="#356b33" opacity="0.92"/><ellipse cx="2.8" cy="65.7" rx="2.1" ry="1.9" fill="#47823f" opacity="0.92"/><ellipse cx="11.5" cy="19.7" rx="3.4" ry="3.0" fill="#5a9650" opacity="0.92"/><ellipse cx="71.5" cy="35.5" rx="3.6" ry="2.7" fill="#356b33" opacity="0.92"/><ellipse cx="19.8" cy="62.3" rx="2.8" ry="2.3" fill="#5a9650" opacity="0.92"/><ellipse cx="2.6" cy="71.4" rx="2.5" ry="2.1" fill="#5a9650" opacity="0.92"/><ellipse cx="11.4" cy="41.2" rx="2.4" ry="2.2" fill="#47823f" opacity="0.92"/><ellipse cx="38.5" cy="73.4" rx="2.7" ry="2.6" fill="#3f7a3a" opacity="0.92"/><ellipse cx="50.4" cy="20.3" rx="2.1" ry="2.3" fill="#356b33" opacity="0.92"/><ellipse cx="12.9" cy="58.1" rx="2.9" ry="2.6" fill="#3f7a3a" opacity="0.92"/><ellipse cx="56.3" cy="25.4" rx="2.6" ry="2.3" fill="#47823f" opacity="0.92"/><ellipse cx="58.6" cy="73.9" rx="3.0" ry="2.2" fill="#3f7a3a" opacity="0.92"/><ellipse cx="58.2" cy="61.6" rx="2.6" ry="2.2" fill="#4d8a43" opacity="0.92"/><ellipse cx="17.1" cy="39.3" rx="2.7" ry="2.1" fill="#356b33" opacity="0.92"/><ellipse cx="17.1" cy="15.6" rx="2.0" ry="1.7" fill="#47823f" opacity="0.92"/><ellipse cx="45.3" cy="67.6" rx="3.3" ry="2.8" fill="#3f7a3a" opacity="0.92"/><ellipse cx="56.5" cy="56.5" rx="2.6" ry="2.3" fill="#4d8a43" opacity="0.92"/><ellipse cx="13.7" cy="59.4" rx="3.0" ry="2.3" fill="#5a9650" opacity="0.92"/><ellipse cx="57.9" cy="72.9" rx="2.9" ry="2.1" fill="#3f7a3a" opacity="0.92"/><ellipse cx="29.5" cy="71.1" rx="3.6" ry="3.1" fill="#47823f" opacity="0.92"/><ellipse cx="65.2" cy="60.7" rx="2.8" ry="2.9" fill="#5a9650" opacity="0.92"/><ellipse cx="59.7" cy="73.5" rx="3.6" ry="2.7" fill="#4d8a43" opacity="0.92"/><ellipse cx="25.9" cy="41.6" rx="2.8" ry="3.0" fill="#47823f" opacity="0.92"/><ellipse cx="2.0" cy="72.8" rx="2.9" ry="2.5" fill="#4d8a43" opacity="0.92"/><ellipse cx="38.4" cy="70.1" rx="3.7" ry="3.8" fill="#356b33" opacity="0.92"/><ellipse cx="62.9" cy="62.1" rx="3.8" ry="3.8" fill="#3f7a3a" opacity="0.92"/><ellipse cx="18.9" cy="22.7" rx="2.4" ry="2.2" fill="#3f7a3a" opacity="0.92"/><ellipse cx="42.6" cy="20.2" rx="3.2" ry="2.4" fill="#47823f" opacity="0.92"/><ellipse cx="10.3" cy="68.3" rx="3.4" ry="3.4" fill="#4d8a43" opacity="0.92"/><ellipse cx="30.9" cy="68.9" rx="2.4" ry="2.3" fill="#4d8a43" opacity="0.92"/><ellipse cx="38.8" cy="39.7" rx="2.5" ry="2.4" fill="#3f7a3a" opacity="0.92"/><ellipse cx="32.2" cy="14.5" rx="3.0" ry="2.9" fill="#47823f" opacity="0.92"/><ellipse cx="57.7" cy="13.8" rx="2.2" ry="1.8" fill="#4d8a43" opacity="0.92"/><ellipse cx="52.5" cy="42.2" rx="3.7" ry="3.2" fill="#3f7a3a" opacity="0.92"/><ellipse cx="8.5" cy="42.5" rx="2.4" ry="1.7" fill="#356b33" opacity="0.92"/><ellipse cx="20.7" cy="58.1" rx="3.0" ry="2.4" fill="#47823f" opacity="0.92"/><ellipse cx="32.5" cy="46.3" rx="2.6" ry="2.3" fill="#3f7a3a" opacity="0.92"/><ellipse cx="37.4" cy="52.3" rx="2.4" ry="1.7" fill="#3f7a3a" opacity="0.92"/><ellipse cx="60.6" cy="11.1" rx="2.7" ry="2.0" fill="#5a9650" opacity="0.92"/><ellipse cx="37.6" cy="26.1" rx="2.3" ry="1.7" fill="#47823f" opacity="0.92"/><ellipse cx="23.6" cy="54.4" rx="2.4" ry="2.6" fill="#47823f" opacity="0.92"/><ellipse cx="40.3" cy="33.6" rx="2.4" ry="2.4" fill="#4d8a43" opacity="0.92"/><ellipse cx="24.5" cy="47.2" rx="3.3" ry="3.2" fill="#5a9650" opacity="0.92"/><ellipse cx="5.6" cy="73.9" rx="2.4" ry="2.3" fill="#5a9650" opacity="0.92"/><ellipse cx="70.0" cy="8.8" rx="2.9" ry="2.6" fill="#3f7a3a" opacity="0.92"/><ellipse cx="3.8" cy="58.6" rx="2.4" ry="1.9" fill="#3f7a3a" opacity="0.92"/><ellipse cx="59.1" cy="20.1" rx="2.4" ry="1.8" fill="#5a9650" opacity="0.92"/><ellipse cx="46.0" cy="60.3" rx="3.1" ry="2.4" fill="#356b33" opacity="0.92"/><ellipse cx="66.8" cy="20.8" rx="2.4" ry="2.6" fill="#47823f" opacity="0.92"/><ellipse cx="38.4" cy="18.6" rx="2.1" ry="1.6" fill="#356b33" opacity="0.92"/><ellipse cx="21.6" cy="38.0" rx="2.7" ry="1.9" fill="#3f7a3a" opacity="0.92"/><ellipse cx="2.1" cy="55.2" rx="3.1" ry="2.2" fill="#47823f" opacity="0.92"/><ellipse cx="8.5" cy="61.6" rx="2.1" ry="1.9" fill="#47823f" opacity="0.92"/><ellipse cx="36.1" cy="62.8" rx="3.3" ry="3.3" fill="#5a9650" opacity="0.92"/><ellipse cx="25.3" cy="62.6" rx="3.8" ry="3.2" fill="#3f7a3a" opacity="0.92"/><ellipse cx="46.2" cy="30.9" rx="2.3" ry="2.3" fill="#356b33" opacity="0.92"/><ellipse cx="4.9" cy="10.6" rx="2.1" ry="2.1" fill="#47823f" opacity="0.92"/><ellipse cx="53.6" cy="19.9" rx="3.8" ry="2.9" fill="#47823f" opacity="0.92"/><ellipse cx="48.6" cy="21.9" rx="2.0" ry="1.5" fill="#5a9650" opacity="0.92"/><ellipse cx="21.8" cy="35.0" rx="2.8" ry="2.5" fill="#4d8a43" opacity="0.92"/><ellipse cx="1.4" cy="20.5" rx="3.4" ry="2.8" fill="#47823f" opacity="0.92"/><ellipse cx="29.4" cy="4.1" rx="3.5" ry="2.6" fill="#47823f" opacity="0.92"/><ellipse cx="38.6" cy="56.5" rx="3.3" ry="2.8" fill="#3f7a3a" opacity="0.92"/><ellipse cx="51.8" cy="66.1" rx="3.7" ry="3.0" fill="#3f7a3a" opacity="0.92"/><ellipse cx="24.2" cy="73.9" rx="3.3" ry="2.4" fill="#47823f" opacity="0.92"/><ellipse cx="52.4" cy="48.6" rx="2.7" ry="2.0" fill="#47823f" opacity="0.92"/><ellipse cx="60.3" cy="67.0" rx="2.1" ry="2.1" fill="#4d8a43" opacity="0.92"/><ellipse cx="53.1" cy="61.1" rx="2.1" ry="2.1" fill="#3f7a3a" opacity="0.92"/><ellipse cx="58.1" cy="62.2" rx="3.6" ry="3.1" fill="#5a9650" opacity="0.92"/><ellipse cx="40.7" cy="47.5" rx="2.6" ry="1.9" fill="#356b33" opacity="0.92"/><ellipse cx="49.3" cy="37.2" rx="3.3" ry="3.6" fill="#5a9650" opacity="0.92"/><ellipse cx="57.6" cy="56.4" rx="2.5" ry="2.7" fill="#356b33" opacity="0.92"/><ellipse cx="39.0" cy="49.8" rx="3.1" ry="2.2" fill="#4d8a43" opacity="0.92"/><ellipse cx="53.3" cy="19.7" rx="2.4" ry="2.4" fill="#47823f" opacity="0.92"/><ellipse cx="19.9" cy="55.0" rx="2.8" ry="2.9" fill="#47823f" opacity="0.92"/><ellipse cx="53.5" cy="73.2" rx="3.6" ry="2.7" fill="#47823f" opacity="0.92"/><ellipse cx="55.5" cy="46.7" rx="2.9" ry="3.0" fill="#4d8a43" opacity="0.92"/><ellipse cx="53.8" cy="23.5" rx="3.3" ry="3.1" fill="#3f7a3a" opacity="0.92"/><ellipse cx="48.7" cy="52.2" rx="2.6" ry="2.3" fill="#5a9650" opacity="0.92"/><ellipse cx="21.7" cy="39.2" rx="3.4" ry="2.5" fill="#356b33" opacity="0.92"/><ellipse cx="15.9" cy="71.0" rx="2.4" ry="1.9" fill="#3f7a3a" opacity="0.92"/><ellipse cx="37.1" cy="66.6" rx="2.1" ry="1.9" fill="#4d8a43" opacity="0.92"/><ellipse cx="17.4" cy="67.4" rx="3.0" ry="3.3" fill="#3f7a3a" opacity="0.92"/><ellipse cx="33.0" cy="23.3" rx="3.6" ry="2.9" fill="#4d8a43" opacity="0.92"/><ellipse cx="9.5" cy="69.6" rx="2.2" ry="1.9" fill="#4d8a43" opacity="0.92"/><ellipse cx="28.9" cy="74.9" rx="3.8" ry="2.9" fill="#47823f" opacity="0.92"/><ellipse cx="26.6" cy="32.7" rx="2.2" ry="2.1" fill="#47823f" opacity="0.92"/><ellipse cx="21.3" cy="70.2" rx="3.2" ry="3.3" fill="#356b33" opacity="0.92"/><ellipse cx="19.9" cy="38.8" rx="3.2" ry="3.2" fill="#4d8a43" opacity="0.92"/></g></svg></div>
<div id="th3" class="abs" style="left:1058px;top:425px;width:76.6px;height:76px;background:#2f374a">
  <div class="abs" style="left:22px;top:22px;width:32px;height:32px;border-radius:50%;background:#fff"></div>
  <svg class="abs" style="left:32px;top:31px" width="12" height="14" viewBox="0 0 12 14"><rect width="12" height="14" rx="1.8" fill="#2f374a"/><path d="M2.8 4.2H9.2M2.8 7H9.2M2.8 9.8H9.2" stroke="#fff" stroke-width="1.5"/></svg>
</div>

<div class="abs" style="left:1069px;top:529.5px;width:65.5px;height:34.5px;border-radius:2px;background:#157efb"></div>
<div id="x41" class="t" style="left:1088.91px;top:540.8px;font-size:12.05px;font-weight:bold;color:#fff">投稿</div>

<!-- scrollbar arrows -->

<div class="hr" style="left:337px;top:218px;width:798px;background:#e2e2e2"></div>
<div class="hr" style="left:337px;top:316px;width:798px;background:#efefef"></div>
<div class="hr" style="left:337px;top:413px;width:798px;background:#efefef"></div>
<div class="hr" style="left:337px;top:511px;width:798px;background:#efefef"></div>

<div id="scroll" class="abs"></div>
<svg class="abs" style="left:1190.5px;top:50.6px" width="7" height="4" viewBox="0 0 9 5"><path d="M0 5H9L4.5 0.5Z" fill="#a3a3a3"/></svg>
<svg class="abs" style="left:1190.5px;top:792.6px" width="7" height="4" viewBox="0 0 9 5"><path d="M0 0H9L4.5 4.5Z" fill="#a3a3a3"/></svg>
<div id="frame-top" class="abs"></div>
<div id="frame-left" class="abs"></div>
<div id="frame-bottom" class="abs"></div>
<div id="frame-bottom2" class="abs"></div>
<div id="frame-right" class="abs"></div>
</body>
</html>
